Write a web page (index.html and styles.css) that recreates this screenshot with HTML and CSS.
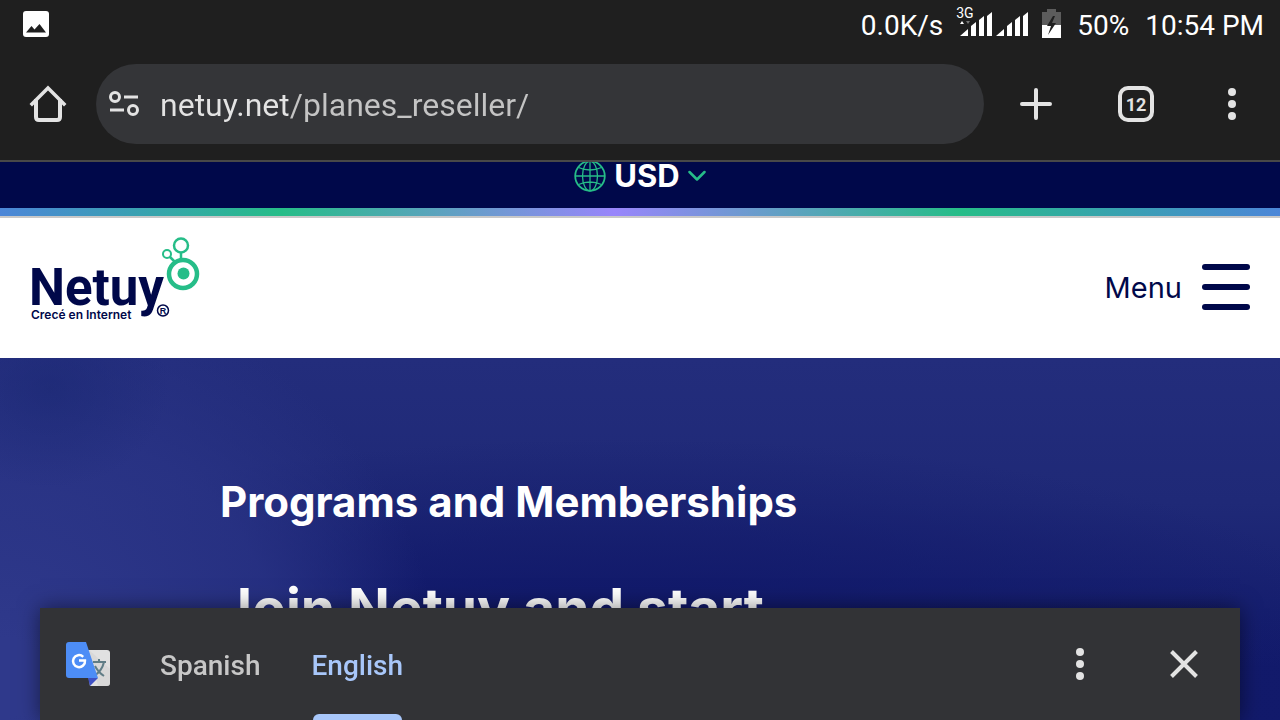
FILE: index.html
```html
<!DOCTYPE html>
<html lang="en">
<head>
    <meta charset="UTF-8">
    <meta name="viewport" content="width=device-width, initial-scale=1.0">
    <title>Netuy - Programs and Memberships</title>
    <link rel="stylesheet" href="styles.css">
</head>
<body>

    <!-- Phone status bar -->
    <div class="status-bar">
        <svg class="status-photo" width="26" height="26" viewBox="0 0 26 26">
            <rect width="26" height="26" rx="3" fill="#fff"/>
            <path d="M3 21.500 8.500 15l3 3.500L16.500 13 23 21.500z" fill="#1f1f1f"/>
        </svg>
        <div class="status-info">
            <span>0.0K/s</span>
            <span class="signals">
                <svg width="76" height="32" viewBox="0 0 76 32" fill="#fff">
                    <path d="M4 31l8-7v7zM15 21l5-4v14h-5zM23 15l5-4v20h-5zM31 11l5-4v24h-5z"/>
                    <path d="M40 31l8-7v7zM51 21l5-4v14h-5zM59 15l5-4v20h-5zM67 11l5-4v24h-5z"/>
                    <path d="M4 19l2-3 2 3z"/>
                    <path d="M10 16h4l-2 3z" fill="#777"/>
                </svg>
                <span class="network">3G</span>
            </span>
            <svg class="battery" width="19" height="29" viewBox="0 0 19 29">
                <path d="M0 3h5V0h9v3h5v13H0z" fill="#5c5c5c"/>
                <path d="M0 16h19v13H0z" fill="#fff"/>
                <path d="M11 7 5 17h4L6 26l8-12h-4l3-7z" fill="#1f1f1f"/>
            </svg>
            <span class="percent">50%</span>
            <span>10:54 PM</span>
        </div>
    </div>

    <!-- Browser toolbar -->
    <div class="toolbar">
        <button type="button" class="icon-btn home" aria-label="Home">
            <svg width="40" height="40" viewBox="0 0 40 40" fill="none" stroke="#e3e3e3" stroke-width="4" stroke-linejoin="round">
                <path d="M8 15v18q0 3 3 3h18q3 0 3-3V15"/>
                <path d="M4 20 20 4l16 16" stroke-linejoin="miter" stroke-linecap="square" stroke-width="3.500"/>
            </svg>
        </button>
        <div class="address">
            <svg width="32" height="28" viewBox="0 0 32 28" fill="none" stroke="#e3e3e3" stroke-width="3">
                <circle cx="7" cy="7" r="4.500"/>
                <path d="M16 7h14M2 20h14"/>
                <circle cx="25" cy="20" r="4.500"/>
            </svg>
            <input type="text" class="url" aria-label="Address" value="netuy.net/planes_reseller/">
        </div>
        <div class="toolbar-actions">
            <button type="button" class="icon-btn" aria-label="New tab">
                <svg width="32" height="32" viewBox="0 0 32 32" stroke="#e3e3e3" stroke-width="4" stroke-linecap="round">
                    <path d="M16 2v28M2 16h28"/>
                </svg>
            </button>
            <button type="button" class="tab-count" aria-label="Open tabs">12</button>
            <button type="button" class="icon-btn" aria-label="Browser menu">
                <svg width="8" height="32" viewBox="0 0 8 32" fill="#e3e3e3">
                    <circle cx="4" cy="4" r="4"/><circle cx="4" cy="16" r="4"/><circle cx="4" cy="28" r="4"/>
                </svg>
            </button>
        </div>
    </div>

    <!-- Site -->
    <div class="currency-bar">
        <button type="button" class="currency">
            <svg width="32" height="32" viewBox="0 0 32 32" fill="none" stroke="#26bd88" stroke-width="1.300">
                <circle cx="16" cy="16" r="14.800" stroke-width="1.800"/>
                <ellipse cx="16" cy="16" rx="7.500" ry="14.800"/>
                <path d="M16 1v30M1 16h30M4.500 7.500q11.500 5 23 0M4.500 24.500q11.500-5 23 0"/>
            </svg>
            USD
            <svg width="18" height="12" viewBox="0 0 18 12" fill="none" stroke="#26bd88" stroke-width="2.500" stroke-linecap="round" stroke-linejoin="round">
                <path d="M1.500 2 9 9.500 16.500 2"/>
            </svg>
        </button>
    </div>
    <div class="rainbow"></div>

    <header class="site-header">
        <a href="#" class="logo" aria-label="Netuy">
            <svg width="180" height="92" viewBox="0 0 180 92">
                <text class="logo-name" x="9" y="73">Netuy</text>
                <text class="logo-tag" x="11" y="87">Crecé en Internet</text>
                <g fill="none" stroke="#26bd88">
                    <circle cx="163" cy="42" r="14" stroke-width="4.500"/>
                    <circle cx="161" cy="13.500" r="7" stroke-width="2.500"/>
                    <circle cx="147" cy="22" r="4" stroke-width="2"/>
                    <path d="M161 21v7M150 25l5 5" stroke-width="2.500"/>
                </g>
                <circle cx="163.500" cy="41.500" r="6" fill="#26bd88"/>
                <circle cx="143" cy="78.500" r="5.500" fill="none" stroke="#00084a" stroke-width="1.500"/>
                <text class="logo-reg" x="143" y="82" text-anchor="middle">R</text>
            </svg>
        </a>
        <button type="button" class="menu-btn">
            Menu
            <span class="bars"><i></i><i></i><i></i></span>
        </button>
    </header>

    <main class="hero">
        <h2>Programs and Memberships</h2>
        <h1>Join Netuy and start</h1>
    </main>

    <!-- Translate popup over the page -->
    <div class="translate">
        <svg class="translate-logo" width="44" height="44" viewBox="0 0 44 44">
            <path d="M18 8h23q3 0 3 3v30q0 3-3 3H24z" fill="#e1e1e1"/>
            <path d="M23 8l21 19v14q0 3-3 3H32z" fill="#d0d0d0" opacity=".5"/>
            <path d="M27 20h13M33 17v3M29 24q3 6 9 10M38 20q-2 9-10 14" fill="none" stroke="#607d86" stroke-width="2"/>
            <path d="M22 36h10l-8 8z" fill="#3f51c4"/>
            <path d="M3 0h17l12 36H3q-3 0-3-3V3q0-3 3-3z" fill="#4d8df6"/>
            <path d="M17.200 14.800A6 6 0 1 0 19 18.500h-6" fill="none" stroke="#fff" stroke-width="2.500"/>
        </svg>
        <div class="languages" role="tablist">
            <button type="button" role="tab" aria-selected="false">Spanish</button>
            <button type="button" role="tab" aria-selected="true" class="active">English</button>
        </div>
        <button type="button" class="icon-btn" aria-label="Translate options">
            <svg width="8" height="32" viewBox="0 0 8 32" fill="#e3e3e3">
                <circle cx="4" cy="4" r="4"/><circle cx="4" cy="16" r="4"/><circle cx="4" cy="28" r="4"/>
            </svg>
        </button>
        <button type="button" class="icon-btn close" aria-label="Close">
            <svg width="28" height="28" viewBox="0 0 28 28" stroke="#e3e3e3" stroke-width="4">
                <path d="M1.500 1.500l25 25M26.500 1.500l-25 25"/>
            </svg>
        </button>
    </div>

</body>
</html>
```
FILE: styles.css
```css
* {
    box-sizing: border-box;
}

body {
    display: flex;
    flex-direction: column;
    height: 100vh;
    margin: 0;
    overflow: hidden;
    font-family: Roboto, sans-serif;
}

svg {
    display: block;
    flex: none;
}

button {
    padding: 0;
    border: none;
    background: none;
    font-family: inherit;
    color: inherit;
    cursor: pointer;
}

.status-bar {
    display: flex;
    justify-content: space-between;
    align-items: center;
    height: 48px;
    flex: none;
    padding: 0 16px 0 23px;
    background: #1f1f1f;
    color: #fff;
    font-size: 28px;
}

.status-info {
    display: flex;
    align-items: center;
    padding-top: 2px;
}

.signals {
    position: relative;
    margin: 0 10px 8px 13px;
}

.network {
    position: absolute;
    top: 0;
    left: 0;
    font-size: 14px;
    line-height: 16px;
}

.battery {
    margin-bottom: 4px;
}

.percent {
    margin: 0 16px;
}

.toolbar {
    display: flex;
    align-items: center;
    height: 114px;
    flex: none;
    padding: 0 44px 0 28px;
    border-bottom: 2px solid #484848;
    background: #1f1f1f;
}

.icon-btn {
    flex: none;
}

.address {
    display: flex;
    align-items: center;
    flex: 1;
    gap: 20px;
    height: 80px;
    margin-left: 28px;
    padding: 0 24px 0 12px;
    border-radius: 40px;
    background: #343538;
}

.url {
    flex: 1;
    min-width: 0;
    height: 48px;
    padding: 2px 0 0;
    border: none;
    outline: none;
    /* the host is brighter than the path */
    background: linear-gradient(90deg, #e3e3e3 128px, #c4c4c4 128px);
    -webkit-background-clip: text;
    background-clip: text;
    color: transparent;
    font-family: inherit;
    font-size: 32px;
}

.toolbar-actions {
    display: flex;
    align-items: center;
    justify-content: space-between;
    width: 216px;
    margin-left: 36px;
}

.tab-count {
    width: 36px;
    height: 36px;
    margin-right: 8px;
    border: 4px solid #e3e3e3;
    border-radius: 10px;
    color: #e3e3e3;
    font-size: 18px;
    font-weight: 700;
}

.currency-bar {
    display: flex;
    justify-content: center;
    height: 46px;
    flex: none;
    overflow: hidden;
    background: #00084a;
}

.currency {
    display: flex;
    align-items: center;
    gap: 8px;
    height: 28px;
    color: #fff;
    font-family: Inter, sans-serif;
    font-size: 31px;
    font-weight: 700;
    line-height: 28px;
}

.rainbow {
    height: 10px;
    flex: none;
    border-bottom: 2px solid #c8c8c8;
    background: linear-gradient(90deg, #4c86d8, #26bd88 22%, #9885fb 48%, #26bd88 75%, #4c86d8);
}

.site-header {
    display: flex;
    justify-content: space-between;
    align-items: center;
    height: 140px;
    flex: none;
    padding: 0 30px 2px 20px;
    background: #fff;
    color: #00084a;
}

.logo svg {
    margin-bottom: 18px;
    fill: #00084a;
}

.logo-name {
    font: 700 51px Roboto, sans-serif;
}

.logo-tag {
    font: 600 12px Inter, sans-serif;
}

.logo-reg {
    font: 700 9px "Liberation Sans", sans-serif;
}

.menu-btn {
    display: flex;
    align-items: center;
    gap: 20px;
    font-family: Inter, sans-serif;
    font-size: 29px;
}

.bars {
    display: flex;
    flex-direction: column;
    gap: 14px;
    width: 48px;
}

.bars i {
    height: 6px;
    border-radius: 3px;
    background: #00084a;
}

.hero {
    flex: 1;
    padding: 116px 220px 0;
    background:
        radial-gradient(ellipse 120px 100px at 50px 30px, rgba(24, 38, 112, 0.5), rgba(24, 38, 112, 0)),
        radial-gradient(ellipse 440px 400px at 0 320px, #2f398b 10%, rgba(42, 52, 134, 0.8) 65%, rgba(36, 46, 125, 0) 100%),
        radial-gradient(ellipse 760px 210px at 620px 290px, #11196a 15%, rgba(17, 25, 106, 0)),
        linear-gradient(#232d7c, #1f2977 40%, #121a6b 85%);
    color: #fff;
    font-family: Inter, sans-serif;
}

.hero h2 {
    margin: 0;
    font-size: 42px;
    line-height: 56px;
}

.hero h1 {
    margin: 42px 0 0;
    font-size: 55px;
    line-height: 72px;
}

.translate {
    position: fixed;
    right: 40px;
    bottom: 0;
    left: 40px;
    display: flex;
    align-items: center;
    height: 112px;
    padding: 0 42px 0 26px;
    background: #323336;
    box-shadow: 0 0 20px rgba(0, 0, 0, 0.5);
}

.languages {
    display: flex;
    align-self: stretch;
    flex: 1;
    gap: 51px;
    margin-left: 50px;
}

.languages button {
    padding-top: 2px;
    color: #c7c7c7;
    font-size: 28px;
    font-weight: 500;
}

.languages .active {
    position: relative;
    color: #a8c7fa;
}

.languages .active::after {
    content: "";
    position: absolute;
    right: 1px;
    bottom: 0;
    left: 2px;
    height: 6px;
    border-radius: 6px 6px 0 0;
    background: #a8c7fa;
}

.close {
    margin-left: 86px;
}
```
